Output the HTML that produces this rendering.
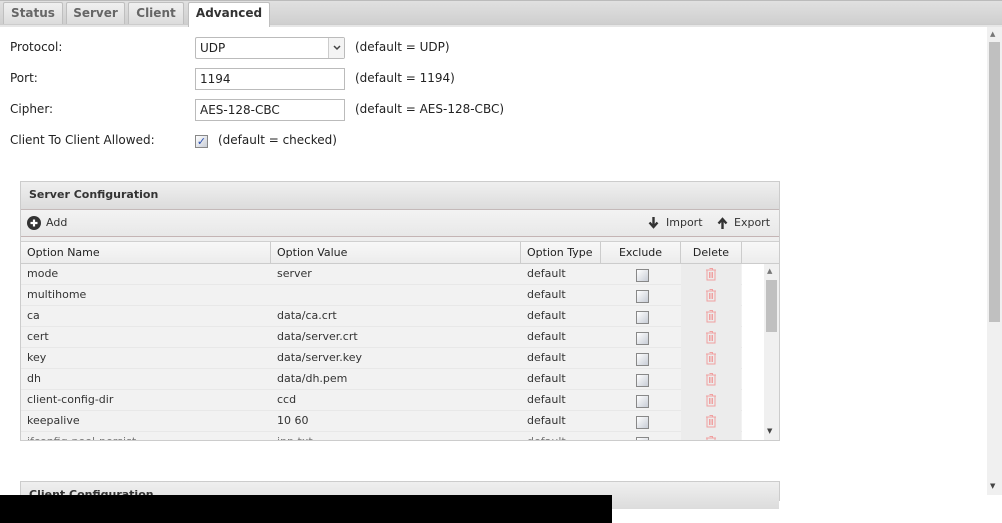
<!DOCTYPE html>
<html><head><meta charset="utf-8"><style>
*{box-sizing:border-box;margin:0;padding:0}
body{width:1002px;height:523px;overflow:hidden;background:#fff;font-family:"DejaVu Sans","Liberation Sans",sans-serif;font-size:12px;color:#222;position:relative}
.a{position:absolute}
.tabbar{left:0;top:0;width:1002px;height:24px;background:linear-gradient(#e0e0e0,#cfcfcf);border-top:1px solid #bbb}
.tabline{left:0;top:24px;width:1002px;height:3px;background:#e6e6e6;border-top:1px solid #ccc}
.tab{top:2px;height:22px;background:linear-gradient(#f0f0f0,#dcdcdc);border:1px solid #bfbfbf;border-bottom:none;color:#666;font-weight:bold;font-size:12px;text-align:center;line-height:20px;border-radius:2px 2px 0 0}
.tab.on{background:#fff;color:#333;height:25px;z-index:2}
.lbl{left:10px;font-size:12px;color:#222}
.inp{left:195px;width:150px;height:22px;border:1px solid #bbb;background:#fff;padding-left:4px;line-height:20px;font-size:12px}
.def{font-size:12px;color:#222}
.panel{left:20px;width:760px;border:1px solid #ccc}
.ph{height:27px;background:linear-gradient(#efefef,#dcdcdc);font-weight:bold;font-size:11px;padding-left:8px;line-height:25px;color:#333}
.tb{position:relative;height:28px;background:linear-gradient(#f3f3f3,#e8e8e8);border-top:1px solid #c4b9b9;border-bottom:1px solid #c4b4b4;font-size:11px;color:#333}
.tb span{position:absolute;line-height:14px;top:6px}
.col{position:absolute;top:0;height:23px;border-right:1px solid #ccc;line-height:22px;font-size:11px;padding-left:6px}
.row{position:absolute;left:0;width:740px;height:21px;background:#f2f2f2;border-bottom:1px solid #e8e8e8;font-size:11px;line-height:20px;color:#333}
.row span{position:absolute}
.cb{position:absolute;left:615px;top:5px;width:13px;height:13px;border:1px solid #888;background:linear-gradient(135deg,#fff,#c8cdd6)}
.del{position:absolute;left:660px;top:0;width:60px;height:21px;background:#ececec}
</style></head><body>
<div class="a tabbar"></div>
<div class="a tabline"></div>
<div class="a tab" style="left:3px;width:60px">Status</div>
<div class="a tab" style="left:66px;width:59px">Server</div>
<div class="a tab" style="left:128px;width:56px">Client</div>
<div class="a tab on" style="left:188px;width:82px">Advanced</div>

<div class="a lbl" style="top:40px">Protocol:</div>
<div class="a inp" style="top:37px;border-radius:2px">UDP<div class="a" style="right:0;top:0;width:16px;height:20px;border-left:1px solid #ccc;background:#f4f4f4"><svg class="a" style="left:4px;top:7px" width="8" height="6" viewBox="0 0 8 6"><path d="M1 1l3 3 3-3" stroke="#444" stroke-width="1.5" fill="none"/></svg></div></div>
<div class="a def" style="left:355px;top:40px">(default = UDP)</div>
<div class="a lbl" style="top:71px">Port:</div>
<div class="a inp" style="top:68px">1194</div>
<div class="a def" style="left:355px;top:71px">(default = 1194)</div>
<div class="a lbl" style="top:102px">Cipher:</div>
<div class="a inp" style="top:99px">AES-128-CBC</div>
<div class="a def" style="left:355px;top:102px">(default = AES-128-CBC)</div>
<div class="a lbl" style="top:133px">Client To Client Allowed:</div>
<div class="a" style="left:195px;top:135px;width:13px;height:13px;border:1px solid #888;background:linear-gradient(135deg,#fff,#c8cdd6);color:#2a4fb0;font-size:11px;line-height:11px;text-align:center">&#10003;</div>
<div class="a def" style="left:218px;top:133px">(default = checked)</div>

<div class="a panel" style="top:181px;height:260px">
 <div class="ph">Server Configuration</div>
 <div class="tb">
  <svg class="a" style="left:6px;top:6px" width="14" height="14" viewBox="0 0 14 14"><circle cx="7" cy="7" r="7" fill="#333"/><path d="M7 3.5v7M3.5 7h7" stroke="#fff" stroke-width="2.2"/></svg>
  <span style="left:25px">Add</span>
  <svg class="a" style="left:627px;top:7px" width="11" height="12" viewBox="0 0 11 12"><path d="M5.5 0v8M1.5 5.5l4 4.5 4-4.5" stroke="#333" stroke-width="2.4" fill="none"/></svg>
  <span style="left:645px">Import</span>
  <svg class="a" style="left:696px;top:7px" width="11" height="12" viewBox="0 0 11 12"><path d="M5.5 12V4M1.5 6.5l4-4.5 4 4.5" stroke="#333" stroke-width="2.4" fill="none"/></svg>
  <span style="left:713px">Export</span>
 </div>
 <div style="position:relative;height:4px;background:#eee"></div>
 <div style="position:relative;height:23px;background:linear-gradient(#f8f8f8,#ececec);border-top:1px solid #d0d0d0;border-bottom:1px solid #ccc">
  <div class="col" style="left:0;width:250px">Option Name</div>
  <div class="col" style="left:250px;width:250px">Option Value</div>
  <div class="col" style="left:500px;width:80px">Option Type</div>
  <div class="col" style="left:580px;width:80px;text-align:center;padding:0">Exclude</div>
  <div class="col" style="left:660px;width:61px;text-align:center;padding:0">Delete</div>
 </div>
 <div style="position:relative;height:176px;overflow:hidden">
  <div class="a" style="left:743px;top:0;width:15px;height:176px;background:#f0f0f0;z-index:3"><div class="a" style="left:2px;top:16px;width:11px;height:52px;background:#c0c0c0"></div><div class="a" style="left:3px;top:3px;font-size:7px;color:#777">&#9650;</div><div class="a" style="left:3px;top:163px;font-size:7px;color:#444">&#9660;</div></div>
  <div class="a" style="left:721px;top:0;width:22px;height:176px;background:#fff;z-index:3"></div>
  <div id="rows"></div>
 </div>
</div>

<div class="a panel" style="top:481px;height:20px;border-bottom:none"><div class="ph">Client Configuration</div></div>

<div class="a" style="left:987px;top:27px;width:15px;height:468px;background:#f0f0f0"><div class="a" style="left:2px;top:15px;width:11px;height:280px;background:#c0c0c0"></div><div class="a" style="left:3px;top:3px;font-size:7px;color:#777">&#9650;</div><div class="a" style="left:3px;top:455px;font-size:7px;color:#444">&#9660;</div></div>
<div class="a" style="left:0;top:495px;width:612px;height:28px;background:#000"></div>

<script>
var d=[["mode","server"],["multihome",""],["ca","data/ca.crt"],["cert","data/server.crt"],["key","data/server.key"],["dh","data/dh.pem"],["client-config-dir","ccd"],["keepalive","10 60"],["ifconfig-pool-persist","ipp.txt"]];
var h="";
d.forEach(function(r,i){
h+='<div class="row" style="top:'+(i*21)+'px'+(i==8?';color:#777':'')+'"><span style="left:6px">'+r[0]+'</span><span style="left:256px">'+r[1]+'</span><span style="left:506px">default</span><div class="cb"></div><div class="del"><svg style="position:absolute;left:24px;top:3px" width="12" height="14" viewBox="0 0 12 14" fill="none" stroke="#f0a0a0" stroke-width="1"><path d="M4.5 1.5h3v1.5M1 3h10M2 3v10h8V3M4.5 5v6M6 5v6M7.5 5v6"/></svg></div></div>';
});
document.getElementById("rows").innerHTML=h;
</script>
</body></html>
